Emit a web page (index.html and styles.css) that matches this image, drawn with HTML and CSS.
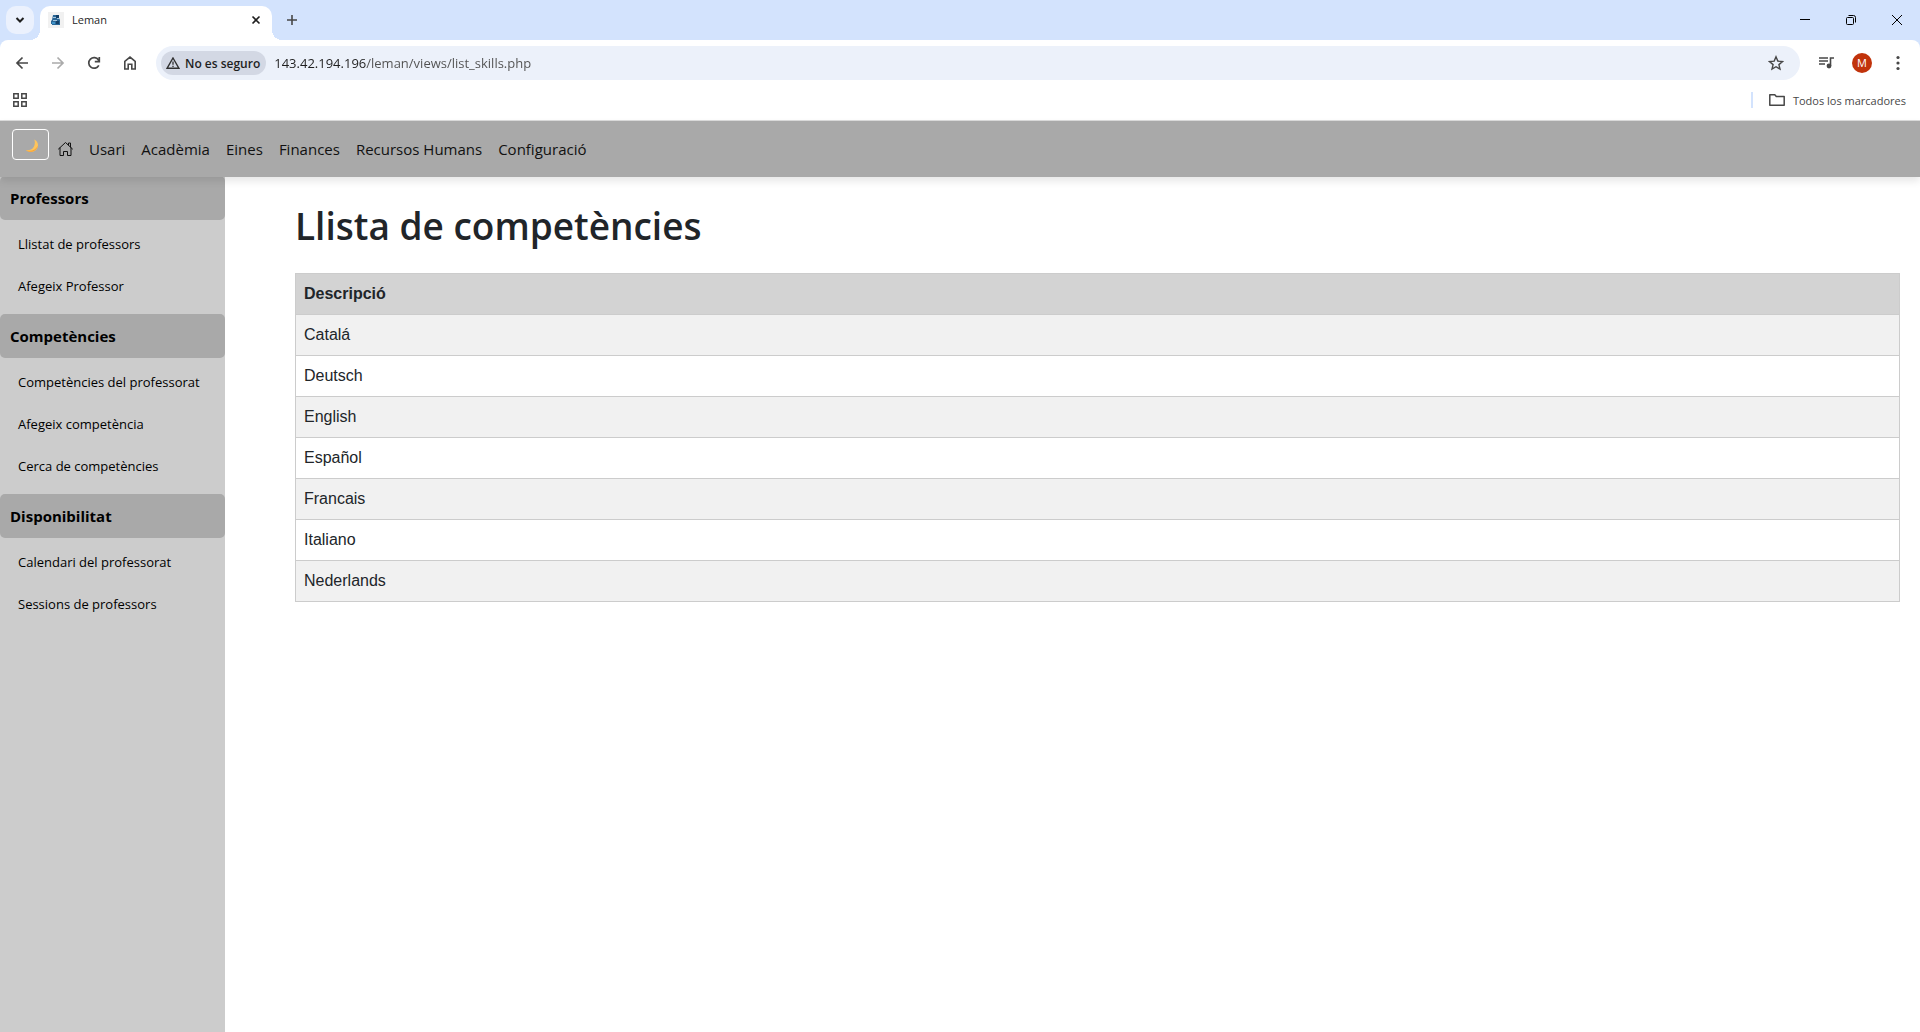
FILE: index.html
```html
<!DOCTYPE html>
<html lang="ca">
<head>
<meta charset="utf-8">
<meta name="viewport" content="width=device-width, initial-scale=1">
<title>Leman</title>
<link rel="stylesheet" href="styles.css">
</head>
<body>
<div class="browser">
  <div class="tabstrip">
    <button class="tab-search" type="button" aria-label="Buscar pestañas"><svg width="10" height="8" viewBox="0 0 10 8"><path d="M1.5 2 5 5.500 8.500 2" fill="none" stroke="#1f1f1f" stroke-width="2"/></svg></button>
    <div class="tab">
      <svg class="favicon" width="16" height="16" viewBox="0 0 16 16"><path fill="#f1f1f1" d="M0 0h16v16H0z"/><path fill="#2a6797" d="M5 3h6v3l1 2v5H4v-1H3V9l1-1z"/><path fill="#123f68" d="M8 3h3v3H8zM8 9h3v3H8z"/><path fill="#a5c4dc" d="M5 5h3v1H5zM5 8h4v1H5zM9 6h2v1H9z"/><path fill="#3f92c8" d="M4 10h3v2H4z"/></svg>
      <span class="tab-title">Leman</span>
      <button class="plain" type="button" aria-label="Cerrar pestaña"><svg width="16" height="16" viewBox="0 0 16 16"><path d="m4.500 4.500 7 7m0-7-7 7" stroke="#1f1f1f" stroke-width="1.600"/></svg></button>
    </div>
    <button class="plain new-tab" type="button" aria-label="Nueva pestaña"><svg width="12" height="12" viewBox="0 0 12 12"><path d="M6 1v10M1 6h10" stroke="#474747" stroke-width="1.600"/></svg></button>
    <div class="window-controls">
      <button type="button" aria-label="Minimizar"><svg width="12" height="12" viewBox="0 0 12 12"><path d="M1 5.500h10" stroke="#000"/></svg></button>
      <button type="button" aria-label="Restaurar"><svg width="12" height="12" viewBox="0 0 12 12"><g fill="none" stroke="#000"><rect x="1.500" y="3.500" width="7" height="7" rx="1"/><path d="M3.500 1.500h5a2 2 0 0 1 2 2v5"/></g></svg></button>
      <button type="button" aria-label="Cerrar"><svg width="12" height="12" viewBox="0 0 12 12"><path d="m1 1 10 10M11 1 1 11" stroke="#000"/></svg></button>
    </div>
  </div>
  <div class="toolbar">
    <button class="tool" type="button" aria-label="Atrás"><svg width="16" height="16" viewBox="0 0 16 16"><path d="M14 8H3m5.500-5.500L3 8l5.500 5.500" fill="none" stroke="#474747" stroke-width="1.700"/></svg></button>
    <button class="tool" type="button" aria-label="Adelante"><svg width="16" height="16" viewBox="0 0 16 16"><path d="M2 8h11M7.500 2.500 13 8l-5.500 5.500" fill="none" stroke="#ababab" stroke-width="1.700"/></svg></button>
    <button class="tool" type="button" aria-label="Recargar"><svg width="16" height="16" viewBox="0 0 16 16"><path d="M12.800 10.300A5.300 5.300 0 1 1 12.500 5L13.300 6.300M13.300 2v4.700H8.800" fill="none" stroke="#474747" stroke-width="1.700"/></svg></button>
    <button class="tool" type="button" aria-label="Inicio"><svg width="16" height="16" viewBox="0 0 16 16"><path d="M2.800 14V6.300L8 2.100l5.200 4.200V14H9.800V9.300H6.200V14z" fill="none" stroke="#474747" stroke-width="1.600"/></svg></button>
    <div class="omnibox">
      <button class="security" type="button"><svg width="14" height="12" viewBox="0 0 14 12"><path d="M7 1 13 11.300H1z" fill="none" stroke="#303030" stroke-width="1.400"/><path d="M7 4.500v3.300M7 8.800V10" stroke="#303030" stroke-width="1.300"/></svg>No es seguro</button>
      <input class="address" type="text" aria-label="Dirección" value="143.42.194.196/leman/views/list_skills.php">
      <button class="plain" type="button" aria-label="Añadir a marcadores"><svg width="16" height="16" viewBox="0 0 16 16"><path d="m8 1.800 1.800 4.300 4.700.4-3.600 3.100 1.100 4.500L8 11.700l-4 2.400 1.100-4.500-3.600-3.100 4.700-.4z" fill="none" stroke="#474747" stroke-width="1.400"/></svg></button>
    </div>
    <button class="tool" type="button" aria-label="Contenido multimedia"><svg width="16" height="14" viewBox="0 0 16 14"><path d="M1 2h9M1 5h9M1 8h6" stroke="#474747" stroke-width="1.500"/><path d="M12.500 10V2H16" fill="none" stroke="#474747" stroke-width="1.600"/><circle cx="11" cy="10" r="2.400" fill="#474747"/></svg></button>
    <button class="tool" type="button" aria-label="Perfil"><span class="avatar">M</span></button>
    <button class="tool" type="button" aria-label="Menú"><svg width="4" height="16" viewBox="0 0 4 16"><g fill="#474747"><circle cx="2" cy="2.500" r="1.600"/><circle cx="2" cy="8" r="1.600"/><circle cx="2" cy="13.500" r="1.600"/></g></svg></button>
  </div>
  <div class="bookmarks">
    <button class="plain" type="button" aria-label="Aplicaciones"><svg width="14" height="14" viewBox="0 0 14 14"><g fill="none" stroke="#474747" stroke-width="1.500"><path d="M.8.800h4.400v4.400H.8zM8.800.800h4.400v4.400H8.800zM.8 8.800h4.400v4.400H.8zM8.800 8.800h4.400v4.400H8.800z"/></g></svg></button>
    <button class="all-bookmarks" type="button"><svg width="16" height="14" viewBox="0 0 16 14"><path d="M.8 12.200V1.800h5l1.500 1.700h7.900v8.700z" fill="none" stroke="#474747" stroke-width="1.500" stroke-linejoin="round"/></svg>Todos los marcadores</button>
  </div>
</div>
<header class="navbar">
  <button class="theme-toggle" type="button" aria-label="Canvia el tema"><svg width="14" height="14" viewBox="0 0 14 14"><path d="M9.300.500c3 1.400 4.500 4.600 3.400 7.800C11.300 12.500 6.300 14.800.700 11.200c4 .3 6.600-.8 8-3.200 1.300-2.300 1.500-4.800.6-7.500z" fill="#ffc55c"/><path d="M12.900 6.500c-.8 5-6 8.500-12.200 4.700 5.800 1.700 10-.2 12.200-4.700z" fill="#f6a43a"/></svg></button>
  <nav class="menu">
    <a href="#" aria-label="Inici"><svg width="16" height="16" viewBox="0 0 16 16"><path d="M1.500 8 8.500 1.500l7 6.500M3 7v7.500h3.500v-4h4v4H14V7M11.500 4V2h2v4" fill="none" stroke="#111" stroke-width="1" stroke-linejoin="round" stroke-linecap="round"/></svg></a>
    <a href="#">Usari</a>
    <a href="#">Acadèmia</a>
    <a href="#">Eines</a>
    <a href="#">Finances</a>
    <a href="#">Recursos Humans</a>
    <a href="#">Configuració</a>
  </nav>
</header>
<div class="page">
  <aside class="sidebar">
    <h2>Professors</h2>
    <ul>
      <li><a href="#">Llistat de professors</a></li>
      <li><a href="#">Afegeix Professor</a></li>
    </ul>
    <h2>Competències</h2>
    <ul>
      <li><a href="#">Competències del professorat</a></li>
      <li><a href="#">Afegeix competència</a></li>
      <li><a href="#">Cerca de competències</a></li>
    </ul>
    <h2>Disponibilitat</h2>
    <ul>
      <li><a href="#">Calendari del professorat</a></li>
      <li><a href="#">Sessions de professors</a></li>
    </ul>
  </aside>
  <main class="content">
    <h1>Llista de competències</h1>
    <table class="skills">
      <thead><tr><th scope="col">Descripció</th></tr></thead>
      <tbody>
        <tr><td>Catalá</td></tr>
        <tr><td>Deutsch</td></tr>
        <tr><td>English</td></tr>
        <tr><td>Español</td></tr>
        <tr><td>Francais</td></tr>
        <tr><td>Italiano</td></tr>
        <tr><td>Nederlands</td></tr>
      </tbody>
    </table>
  </main>
</div>
</body>
</html>
```
FILE: styles.css
```css
*, *::before, *::after { box-sizing: border-box; }

body {
  margin: 0;
  min-height: 100vh;
  display: flex;
  flex-direction: column;
  background: #fff;
  color: #212529;
  font-family: "Segoe UI", "Open Sans", "Noto Sans", sans-serif;
  font-size: 15px;
  line-height: 24px;
}

button {
  border: 0;
  padding: 0;
  background: none;
  color: inherit;
  font-family: inherit;
}

svg { display: block; flex: none; }
a { color: inherit; text-decoration: none; }

/* Browser window */
.browser {
  background: #d3e3fd;
  border-bottom: 1px solid #dcdcdc;
  color: #1f1f1f;
}

.tabstrip {
  display: flex;
  align-items: center;
  height: 40px;
  padding-left: 6px;
}

.tab-search {
  display: grid;
  place-items: center;
  width: 28px;
  height: 28px;
  border-radius: 10px;
  background: #ebf1fd;
}

.tab {
  position: relative;
  align-self: flex-end;
  display: flex;
  align-items: center;
  gap: 8px;
  width: 232px;
  height: 34px;
  margin-left: 6px;
  padding: 0 8px;
  padding-bottom: 6px;
  border-radius: 10px 10px 0 0;
  background: #fff;
}

.tab::before,
.tab::after {
  content: "";
  position: absolute;
  bottom: 0;
  width: 10px;
  height: 10px;
}

.tab::before { left: -10px; background: radial-gradient(circle at 0 0, transparent 10px, #fff 10px); }
.tab::after { right: -10px; background: radial-gradient(circle at 100% 0, transparent 10px, #fff 10px); }

.tab-title { flex: 1; font-size: 11px; line-height: 16px; }
.new-tab { margin-left: 14px; }

.window-controls { display: flex; margin-left: auto; }
.window-controls button { display: grid; place-items: center; width: 46px; height: 40px; }

.toolbar {
  display: flex;
  align-items: center;
  padding: 6px 4px;
  border-radius: 8px 8px 0 0;
  background: #fff;
}

.tool { display: grid; place-items: center; width: 36px; height: 34px; }

.omnibox {
  flex: 1;
  display: flex;
  align-items: center;
  height: 34px;
  margin: 0 8px;
  padding: 0 16px 0 5px;
  border-radius: 17px;
  background: #ecf1fa;
}

.security {
  display: flex;
  align-items: center;
  gap: 5px;
  height: 24px;
  padding: 0 6px 0 5px;
  border-radius: 12px;
  background: #d3d8e4;
  font-size: 12px;
  font-weight: 600;
}

.address {
  flex: 1;
  height: 24px;
  margin-left: 8px;
  padding: 0;
  border: 0;
  outline: 0;
  background: linear-gradient(90deg, #1f1f1f 92px, #505050 92px) text;
  color: transparent;
  font-family: inherit;
  font-size: 13px;
}

.avatar {
  width: 20px;
  height: 20px;
  border-radius: 50%;
  background: #c1330b;
  color: #fff;
  font-size: 11px;
  line-height: 20px;
}

.bookmarks {
  display: flex;
  align-items: center;
  justify-content: space-between;
  height: 34px;
  padding: 0 14px 6px 13px;
  background: #fff;
}

.all-bookmarks {
  display: flex;
  align-items: center;
  gap: 8px;
  height: 16px;
  padding-left: 16px;
  border-left: 2px solid #d3e3fd;
  color: #474747;
  font-size: 11px;
}

/* Site navigation */
.navbar {
  position: relative;
  z-index: 1;
  display: flex;
  align-items: flex-start;
  height: 56px;
  padding: 8px 12px;
  background: #a9a9a9;
  box-shadow: 0 4px 8px rgba(0, 0, 0, 0.1);
  color: #111;
}

.theme-toggle {
  display: grid;
  place-items: center;
  width: 37px;
  height: 31px;
  padding: 2px 0 0 2px;
  border: 1px solid #fff;
  border-radius: 4px;
}

.menu { display: flex; align-items: center; height: 40px; }
.menu a { padding: 0 8px; }

/* Page body; the first sidebar heading tucks under the navbar edge */
.page { flex: 1; display: flex; margin-top: -1px; }

.sidebar {
  flex: none;
  width: 225px;
  background: #ccc;
  color: #000;
}

.sidebar h2 {
  margin: 0;
  padding: 10px;
  border-radius: 5px;
  background: #a9a9a9;
  font-size: 15px;
  font-weight: 700;
  line-height: 24px;
}

.sidebar ul { margin: 0; padding: 3px 0 7px; list-style: none; }
.sidebar li a { display: block; padding: 10px 18px; font-size: 13px; line-height: 22px; }

.content { flex: 1; padding: 26px 20px 20px 70px; }

.content h1 {
  margin: 0 0 23px;
  font-size: 37px;
  font-weight: 600;
  line-height: 48px;
}

.skills {
  width: 100%;
  border-collapse: collapse;
  border: 1px solid #ccc;
  font-family: Arial, "Liberation Sans", sans-serif;
  font-size: 16px;
}

.skills th,
.skills td {
  padding: 8px;
  border-bottom: 1px solid #ccc;
  text-align: left;
}

.skills th { background: #d3d3d3; }
.skills tbody tr:nth-child(odd) { background: #f1f1f1; }
```
